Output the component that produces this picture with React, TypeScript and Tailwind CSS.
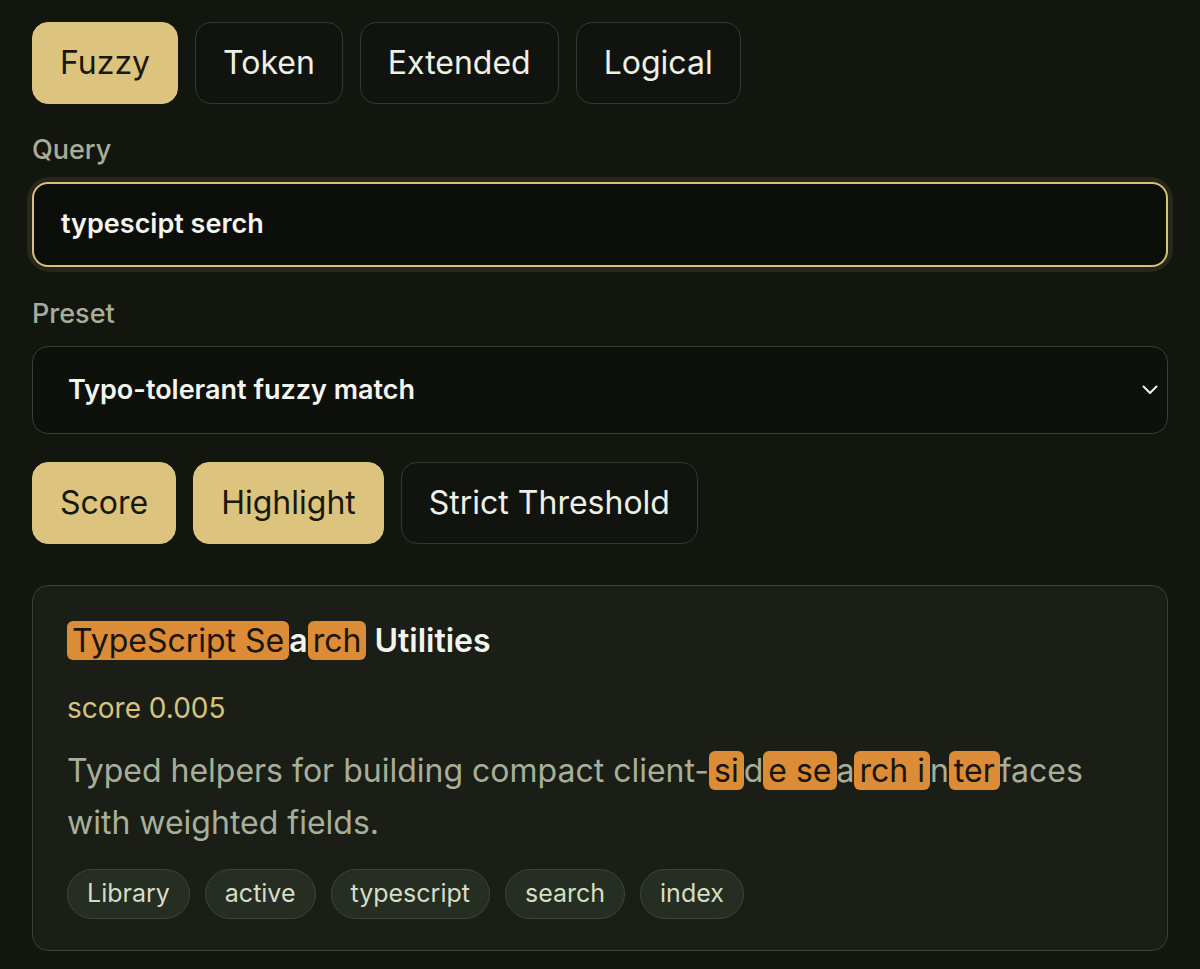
import React from 'react';

type Segment = { text: string; hit?: boolean };

const modes = ['Fuzzy', 'Token', 'Extended', 'Logical'];
const toggles = [
  { label: 'Score', on: true },
  { label: 'Highlight', on: true },
  { label: 'Strict Threshold', on: false },
];

const titleParts: Segment[] = [
  { text: 'TypeScript Se', hit: true },
  { text: 'a' },
  { text: 'rch', hit: true },
  { text: ' Utilities' },
];

const descParts: Segment[] = [
  { text: 'Typed helpers for building compact client-' },
  { text: 'si', hit: true },
  { text: 'd' },
  { text: 'e se', hit: true },
  { text: 'a' },
  { text: 'rch i', hit: true },
  { text: 'n' },
  { text: 'ter', hit: true },
  { text: 'faces with weighted fields.' },
];

const tags = ['Library', 'active', 'typescript', 'search', 'index'];

const Highlighted: React.FC<{ parts: Segment[] }> = ({ parts }) => (
  <>
    {parts.map((p, i) =>
      p.hit ? (
        <mark
          key={i}
          className="bg-[#dc8b36] text-[#17160f] font-normal rounded-[6px] px-[5px] [box-decoration-break:clone]"
        >
          {p.text}
        </mark>
      ) : (
        <span key={i}>{p.text}</span>
      ),
    )}
  </>
);

const Pill: React.FC<{ label: string; on: boolean }> = ({ label, on }) => (
  <button
    className={
      'h-[82px] px-[27px] rounded-[16px] border text-[32px] leading-none ' +
      (on
        ? 'bg-[#dcc47e] border-[#dcc47e] text-[#18180f]'
        : 'bg-[#11140e] border-[#34382f] text-[#eef0e6]')
    }
  >
    {label}
  </button>
);

export default function App() {
  return (
    <div
      className="min-h-screen bg-[#13160f] px-[32px] pt-[22px] pb-[20px]"
      style={{ fontFamily: 'Inter, "Noto Sans", sans-serif' }}
    >
      {/* search mode */}
      <div className="flex gap-[17px]">
        {modes.map((m, i) => (
          <Pill key={m} label={m} on={i === 0} />
        ))}
      </div>

      <label className="block mt-[30px] text-[27px] leading-[32px] font-medium text-[#a8ad9a]">Query</label>
      <div className="mt-[16px] rounded-[18px] ring-[5px] ring-[#dcc47e]/10">
        <div className="h-[85px] flex items-center px-[27px] rounded-[16px] border-2 border-[#d8c178] bg-[#0c0e0a]">
          <span className="text-[27px] font-semibold text-[#f4f5ee]">typescipt serch</span>
        </div>
      </div>

      <label className="block mt-[31px] text-[27px] leading-[32px] font-medium text-[#a8ad9a]">Preset</label>
      <div className="mt-[16px] h-[88px] flex items-center justify-between pl-[35px] pr-[9px] rounded-[16px] border border-[#3a3e35] bg-[#0e100c]">
        <span className="text-[27px] font-semibold text-[#f4f5ee]">Typo-tolerant fuzzy match</span>
        <svg width="16" height="10" viewBox="0 0 16 10" fill="none">
          <path d="M1.5 1.5 8 8l6.5-6.5" stroke="#f1f2ea" strokeWidth="2" strokeLinecap="round" strokeLinejoin="round" />
        </svg>
      </div>

      {/* result options */}
      <div className="flex gap-[17px] mt-[28px]">
        {toggles.map((t) => (
          <Pill key={t.label} label={t.label} on={t.on} />
        ))}
      </div>

      {/* result card */}
      <div className="mt-[41px] rounded-[16px] border border-[#3b4035] bg-[#1a1e17] pl-[34px] pr-[40px] pt-[35px] pb-[31px]">
        <h3 className="text-[32px] leading-[40px] font-semibold text-[#f3f5ec]">
          <Highlighted parts={titleParts} />
        </h3>
        <div className="mt-[30px] text-[28px] leading-[34px] text-[#d8c27c]">score 0.005</div>
        <p className="mt-[20px] text-[32px] leading-[52px] text-[#a8af98] max-w-[1050px]">
          <Highlighted parts={descParts} />
        </p>
        <div className="mt-[20px] flex gap-[15px]">
          {tags.map((t) => (
            <span
              key={t}
              className="h-[50px] flex items-center px-[19px] rounded-full border border-[#3d4537] bg-[#262d22] text-[25px] text-[#d6ddc5]"
            >
              {t}
            </span>
          ))}
        </div>
      </div>
    </div>
  );
}
